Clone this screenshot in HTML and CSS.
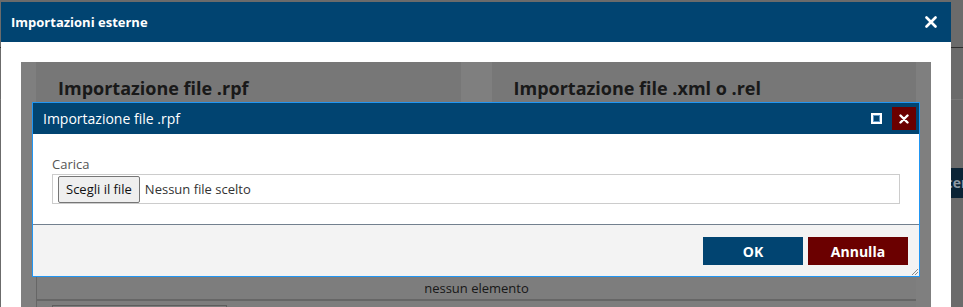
FILE: index.html
```html
<!DOCTYPE html>
<html>
    <head>
        <meta charset="UTF-8" />
        <meta name="viewport" content="width=device-width, initial-scale=1.0" />
        <title>Importazioni esterne</title>
        <link rel="stylesheet" href="styles.css">
    </head>
    <body>
        <!-- pagina sotto i dialoghi -->
        <div class="page">
            <div class="pageTop"></div>
            <div class="pageBar"></div>
            <div class="pageTools"><span class="pageBtn">Ricerca</span></div>
        </div>

        <div class="dialog outer">
            <div class="outerHead">
                <span class="outerTitle">Importazioni esterne</span>
                <svg class="outerClose" width="12" height="12" viewBox="0 0 12 12">
                    <path d="M1.5 1.5 L10.5 10.5 M10.5 1.5 L1.5 10.5" stroke="#fff" stroke-width="2.6" stroke-linecap="round" />
                </svg>
            </div>
            <div class="outerBody">
                <div class="content">
                    <div class="panels">
                        <div class="panel"><h3>Importazione file .rpf</h3></div>
                        <div class="panel"><h3>Importazione file .xml o .rel</h3></div>
                    </div>
                    <div class="table">
                        <div class="tableHead"></div>
                        <div class="tableRow">nessun elemento</div>
                        <div class="tableFoot"><span class="pager"></span></div>
                    </div>
                    <div class="dim"></div>
                </div>
            </div>
        </div>

        <div class="dialog inner">
            <div class="innerHead">
                <span class="innerTitle">Importazione file .rpf</span>
                <span class="maxBtn"></span>
                <span class="closeBtn">
                    <svg width="10" height="10" viewBox="0 0 10 10">
                        <path d="M1.5 1.5 L8.5 8.5 M8.5 1.5 L1.5 8.5" stroke="#fff" stroke-width="2.4" stroke-linecap="round" />
                    </svg>
                </span>
            </div>
            <div class="innerBody">
                <label class="fieldLabel">Carica</label>
                <div class="fileBox">
                    <button class="fileBtn">Scegli il file</button>
                    <span class="fileName">Nessun file scelto</span>
                </div>
            </div>
            <div class="innerFoot">
                <button class="actBtn okBtn">OK</button>
                <button class="actBtn cancelBtn">Annulla</button>
                <svg class="grip" width="7" height="7" viewBox="0 0 7 7">
                    <path d="M7 1 L1 7 M7 4 L4 7" stroke="#8a8a8a" stroke-width="1" />
                </svg>
            </div>
        </div>
    </body>
</html>
```

FILE: styles.css
```css
/* base */
*,
*::before,
*::after {
    box-sizing: border-box;
}
html,
body {
    margin: 0;
    padding: 0;
    height: 100%;
    overflow: hidden;
    font-family: "Open Sans", "Liberation Sans", sans-serif;
    background: #6b6b6b;
    color: #333;
}

/* pagina di sfondo */
.page {
    width: 100%;
}
.pageTop {
    height: 48px;
    border-bottom: 1px solid #2f2f2f;
}
.pageBar {
    height: 52px;
    border-bottom: 1px solid #777;
}
.pageTools {
    display: flex;
    justify-content: flex-end;
    margin-top: 68px;
    margin-right: -30px;
}
.pageBtn {
    background: #0b2436;
    color: #8d99a3;
    font-size: 14px;
    font-weight: bold;
    line-height: 30px;
    padding: 0 10px;
}

/* dialoghi */
.dialog {
    position: absolute;
    background: #fff;
}
.outer {
    left: 1px;
    top: 2px;
    width: 950px;
    height: 340px;
}
.outerHead {
    display: flex;
    align-items: center;
    justify-content: space-between;
    height: 40px;
    padding: 0 14px 0 10px;
    background: #014471;
}
.outerTitle {
    color: #fff;
    font-size: 13px;
    font-weight: bold;
}
.outerBody {
    padding: 20px;
}

.content {
    position: relative;
    padding: 0 15px;
    background: #fff;
    height: 300px;
}
.panels {
    display: flex;
    gap: 31px;
}
.panel {
    flex: 1;
    height: 190px;
    background: #efefef;
    padding: 14px 22px;
}
.panel h3 {
    margin: 0;
    font-size: 18px;
    line-height: 24px;
    font-weight: bold;
    color: #333;
}

.table {
    margin-top: 5px;
    border-left: 1px solid #ccc;
    background: #fafafa;
}
.tableHead {
    height: 21px;
}
.tableRow {
    height: 23px;
    line-height: 21px;
    text-align: center;
    font-size: 13px;
    color: #333;
    border-bottom: 2px solid #ccc;
}
.tableFoot {
    padding: 4px 15px;
}
.pager {
    display: block;
    width: 175px;
    height: 20px;
    border: 1px solid #bbb;
}
.dim {
    position: absolute;
    top: 0;
    left: 0;
    right: 0;
    bottom: 0;
    background: rgba(0, 0, 0, 0.5);
}

/* dialogo interno */
.inner {
    left: 32px;
    top: 102px;
    width: 888px;
    border: 1px solid #2196f3;
}
.innerHead {
    display: flex;
    align-items: center;
    height: 31px;
    padding: 0 3px 0 10px;
    background: #014471;
}
.innerTitle {
    flex: 1;
    color: #fff;
    font-size: 14px;
}
.maxBtn {
    width: 11px;
    height: 11px;
    border: 2px solid #fff;
    background: #014471;
    box-shadow: inset 0 0 0 1px #5d97c9;
    margin-right: 10px;
}
.closeBtn {
    display: flex;
    align-items: center;
    justify-content: center;
    width: 24px;
    height: 23px;
    background: #6b0000;
}

.innerBody {
    padding: 21px 19px 20px 19px;
}
.fieldLabel {
    display: block;
    font-size: 13px;
    line-height: 18px;
    color: #555;
    margin-bottom: 1px;
}
.fileBox {
    display: flex;
    align-items: center;
    height: 30px;
    border: 1px solid #ccc;
    padding: 0 5px;
}
.fileBtn {
    font-family: inherit;
    font-size: 13px;
    height: 27px;
    padding: 0 7px;
    background: #efefef;
    color: #111;
    border: 1px solid #767676;
    border-radius: 2px;
}
.fileName {
    font-size: 13px;
    color: #333;
    margin-left: 5px;
}

.innerFoot {
    position: relative;
    display: flex;
    justify-content: flex-end;
    gap: 5px;
    padding: 12px 11px 11px 0;
    background: #f3f3f3;
    border-top: 1px solid #72808e;
}
.actBtn {
    width: 100px;
    height: 28px;
    border: none;
    font-family: inherit;
    font-size: 14px;
    font-weight: bold;
    color: #fff;
    cursor: pointer;
}
.okBtn {
    background: #014471;
}
.cancelBtn {
    background: #6b0000;
}
.grip {
    position: absolute;
    right: 1px;
    bottom: 1px;
}
```
